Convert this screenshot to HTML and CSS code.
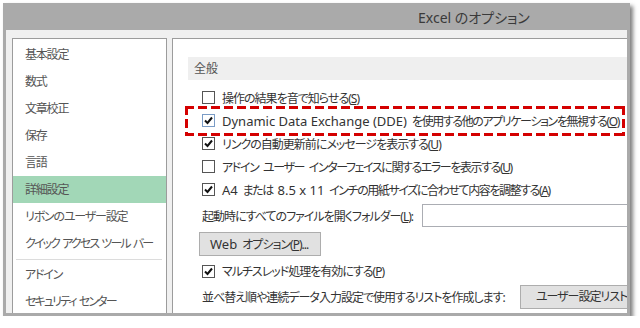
FILE: index.html
```html
<!DOCTYPE html>
<html lang="ja">
<head>
  <meta charset="UTF-8" />
  <title>Excel のオプション</title>
  <link rel="stylesheet" href="styles.css">
</head>
<body>
  <div class="window">
    <div class="titlebar">
      <span class="title">Excel のオプション</span>
    </div>
    <div class="dialog-body">
      <nav class="nav">
        <div class="nav-item">基本設定</div>
        <div class="nav-item">数式</div>
        <div class="nav-item">文章校正</div>
        <div class="nav-item">保存</div>
        <div class="nav-item">言語</div>
        <div class="nav-item active">詳細設定</div>
        <div class="nav-item">リボンのユーザー設定</div>
        <div class="nav-item narrow">クイック アクセス ツール バー</div>
        <div class="nav-sep"></div>
        <div class="nav-item">アドイン</div>
        <div class="nav-item narrow">セキュリティ センター</div>
      </nav>

      <div class="pane">
        <div class="section-head">全般</div>
        <div class="options">
          <div class="opt">
            <span class="cb"></span>
            <span>操作の結果を音で知らせる(<u>S</u>)</span>
          </div>
          <div class="opt marked">
            <span class="cb focus"><svg viewBox="0 0 11 11"><path d="M2 5.5 L4.5 8 L9 2.5" /></svg></span>
            <span><span class="lat">Dynamic Data Exchange (DDE)</span> <span class="tight">を使用する他のアプリケーションを無視する(<u>O</u>)</span></span>
          </div>
          <div class="opt">
            <span class="cb"><svg viewBox="0 0 11 11"><path d="M2 5.5 L4.5 8 L9 2.5" /></svg></span>
            <span>リンクの自動更新前にメッセージを表示する(<u>U</u>)</span>
          </div>
          <div class="opt">
            <span class="cb"></span>
            <span class="tight">アドイン ユーザー インターフェイスに関するエラーを表示する(<u>U</u>)</span>
          </div>
          <div class="opt">
            <span class="cb"><svg viewBox="0 0 11 11"><path d="M2 5.5 L4.5 8 L9 2.5" /></svg></span>
            <span class="tight"><span class="lat">A4</span> または <span class="lat">8.5 x 11</span> インチの用紙サイズに合わせて内容を調整する(<u>A</u>)</span>
          </div>

          <div class="field-row">
            <span>起動時にすべてのファイルを開くフォルダー(<u>L</u>):</span>
            <span class="textbox"></span>
          </div>

          <div class="btn-row">
            <span class="btn"><span class="lat">Web</span> オプション(<u>P</u>)...</span>
          </div>

          <div class="opt multi">
            <span class="cb"><svg viewBox="0 0 11 11"><path d="M2 5.5 L4.5 8 L9 2.5" /></svg></span>
            <span>マルチスレッド処理を有効にする(<u>P</u>)</span>
          </div>

          <div class="field-row sort-row">
            <span>並べ替え順や連続データ入力設定で使用するリストを作成します:</span>
            <span class="btn wide">ユーザー設定リストの編集(<u>O</u>)...</span>
          </div>
        </div>
      </div>
    </div>
  </div>
</body>
</html>
```

FILE: styles.css
```css
body {
  margin: 0;
  background: #fff;
  font-family: "Noto Sans", "Noto Sans CJK JP", sans-serif;
  font-size: 12px;
  font-feature-settings: "palt";
  color: #333;
}

.window {
  margin: 3px 0 0 3px;
  width: 627px;
  height: 313px;
  background: #aaaaaa;
  padding: 0 3px 3px 3px;
  box-sizing: border-box;
  display: flex;
  flex-direction: column;
  box-shadow: 3px 3px 4px rgba(0,0,0,0.5);
}

.titlebar {
  height: 27px;
  flex: none;
  display: flex;
  align-items: center;
  padding-left: 412px;
}

.title {
  font-size: 14px;
  color: #3a3a3a;
  margin-top: 1px;
}

.dialog-body {
  flex: 1;
  background: #f0f0f0;
  padding: 8px 0 0 6px;
  display: flex;
  gap: 5px;
  overflow: hidden;
}

.nav {
  width: 153px;
  flex: none;
  background: #fff;
  border: 1px solid #9c9c9c;
  border-bottom: none;
  padding-top: 2px;
}

.nav-item {
  height: 27px;
  line-height: 27px;
  padding-left: 12px;
  color: #555;
  letter-spacing: -1.2px;
  word-spacing: 4px;
  white-space: nowrap;
}

.nav-item.narrow {
  letter-spacing: -1.9px;
  word-spacing: 2px;
}

.nav-item.active {
  background: #a2d7b7;
}

.nav-sep {
  height: 1px;
  background: #dcdcdc;
  margin: 2px 4px 1px 3px;
}

.pane {
  flex: 1;
  background: #fff;
  border: 1px solid #9c9c9c;
  border-right: none;
  border-bottom: none;
  padding: 18px 0 0 15px;
  overflow: hidden;
  letter-spacing: -1px;
  word-spacing: 3px;
}

.tight {
  letter-spacing: -1.4px;
}

.lat {
  font-size: 13px;
  letter-spacing: 0;
  word-spacing: 0;
}

.section-head {
  height: 23px;
  line-height: 23px;
  background: #efefef;
  padding-left: 6px;
  color: #555;
  letter-spacing: 0;
}

.options {
  padding: 6px 0 0 14px;
}

.opt {
  height: 23px;
  display: flex;
  align-items: center;
  gap: 7px;
  white-space: nowrap;
  position: relative;
}

/* red dashed highlight around the DDE option */
.opt.marked::after {
  content: "";
  position: absolute;
  left: -17px;
  right: 2px;
  top: -3px;
  bottom: -4px;
  background:
    repeating-linear-gradient(90deg, #d40000 0 9px, transparent 9px 13px) top left / 100% 3px no-repeat,
    repeating-linear-gradient(90deg, #d40000 0 9px, transparent 9px 13px) bottom left / 100% 3px no-repeat,
    repeating-linear-gradient(180deg, #d40000 0 9px, transparent 9px 13px) top left / 3px 100% no-repeat,
    repeating-linear-gradient(180deg, #d40000 0 9px, transparent 9px 13px) top right / 3px 100% no-repeat;
}

.cb {
  width: 11px;
  height: 11px;
  border: 1px solid #555;
  background: #fff;
  flex: none;
  display: flex;
}

.cb.focus {
  border-color: #7a9cc6;
}

.cb svg {
  width: 11px;
  height: 11px;
}

.cb path {
  fill: none;
  stroke: #111;
  stroke-width: 2;
}

.field-row {
  margin-top: 3px;
  height: 23px;
  display: flex;
  align-items: center;
  gap: 9px;
  white-space: nowrap;
}

.textbox {
  width: 260px;
  height: 21px;
  border: 1px solid #abadb3;
  flex: none;
}

.btn-row {
  margin: 5px 0 0 -3px;
  height: 24px;
}

.btn {
  display: inline-block;
  height: 22px;
  line-height: 22px;
  padding: 0 10px;
  background: #e1e1e1;
  border: 1px solid #adadad;
  white-space: nowrap;
}

.btn-row .btn {
  width: 100px;
}

.opt.multi {
  margin-top: 3px;
  height: 24px;
}

.sort-row {
  height: 24px;
  margin-top: 2px;
  gap: 15px;
}

.btn.wide {
  flex: none;
  padding: 0 15px;
}
```
